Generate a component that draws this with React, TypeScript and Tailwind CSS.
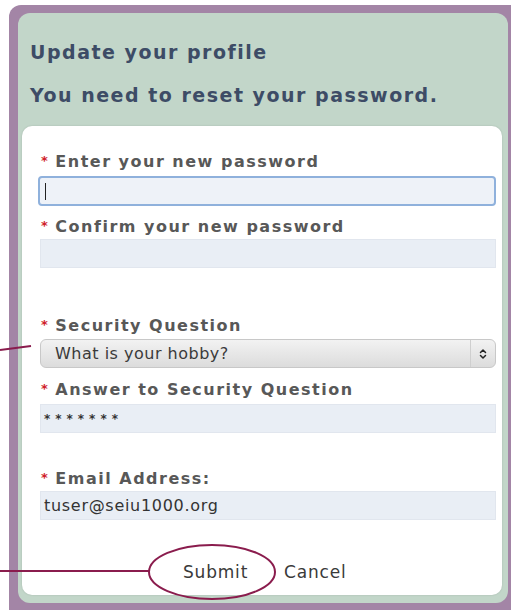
import { ChevronsUpDown } from 'lucide-react';

const font = { fontFamily: '"DejaVu Sans", Verdana, sans-serif' };

const FieldLabel = ({ text, className = '' }: { text: string; className?: string }) => (
  <div className={`flex items-center h-[20px] pl-[3px] text-[16px] tracking-[1.5px] font-bold text-[#585858] ${className}`}>
    <span className="text-[#d0202a] text-[13px] mr-[6px] -mt-[3px]">*</span>
    <span>{text}</span>
  </div>
);

const TextBox = ({ value, className = '' }: { value?: string; className?: string }) => (
  <div className={`h-[29px] bg-[#e9eef5] border border-[#e1e6ee] flex items-center pl-[3px] text-[16px] tracking-[0.7px] text-[#333] ${className}`}>
    {value}
  </div>
);

export default function App() {
  return (
    <div className="relative w-[511px] h-[610px] bg-white overflow-hidden" style={font}>
      <div className="ml-[9px] mt-[5px] h-[610px] bg-[#a385a6] rounded-tl-[12px] pl-[9px] pt-[8px] pr-[3px]">
        <div className="h-[590px] bg-[#c2d6c9] rounded-[12px] pl-[4px] pr-[6px] flex flex-col">
          <div className="pl-[8px] pt-[26px] text-[19px] tracking-[1.5px] font-bold text-[#3d4c66] leading-[26px]">
            <div>Update your profile</div>
            <div className="mt-[17px]">You need to reset your password.</div>
          </div>
          <div className="mt-[18px] flex-1 mb-[8px] bg-white rounded-[10px] shadow-[0_0_2px_rgba(0,0,0,0.15)] pl-[16px] pr-[6px] pt-[26px]">
            <FieldLabel text="Enter your new password" />
            <div className="mt-[4px] h-[30px] bg-[#eef2f8] border-2 border-[#8fb1dc] rounded-[4px] flex items-center pl-[5px]">
              <div className="w-[1px] h-[17px] bg-[#222]" />
            </div>
            <FieldLabel text="Confirm your new password" className="mt-[11px]" />
            <TextBox className="mt-[2px] ml-[2px]" />
            <FieldLabel text="Security Question" className="mt-[48px]" />
            <div className="mt-[3px] ml-[2px] h-[29px] rounded-[6px] border border-[#c8c8c8] bg-gradient-to-b from-[#f2f2f2] to-[#dcdcdc] flex items-center justify-between pl-[14px] pr-[4px] text-[16px] tracking-[0.5px] text-[#3a3a3a]">
              <span>What is your hobby?</span>
              <span className="h-full flex items-center border-l border-[#cfcfcf] pl-[6px] pr-[2px]">
                <ChevronsUpDown className="w-[12px] h-[14px] text-[#222]" strokeWidth={3} />
              </span>
            </div>
            <FieldLabel text="Answer to Security Question" className="mt-[12px]" />
            <TextBox className="mt-[4px] ml-[2px] !tracking-[5px] !text-[12px] font-bold" value="*******" />
            <FieldLabel text="Email Address:" className="mt-[36px]" />
            <TextBox className="mt-[2px] ml-[2px]" value="tuser@seiu1000.org" />
            <div className="mt-[43px] flex items-center h-[20px] text-[17px] tracking-[0.8px] text-[#3a3a3a]">
              <span className="ml-[145px]">Submit</span>
              <span className="ml-[36px]">Cancel</span>
            </div>
          </div>
        </div>
      </div>
      <svg className="absolute inset-0 pointer-events-none" width="511" height="610">
        <line x1="0" y1="350" x2="31" y2="346" stroke="#8a1c4d" strokeWidth="2" />
        <line x1="0" y1="571" x2="150" y2="571" stroke="#8a1c4d" strokeWidth="2" />
        <ellipse cx="212" cy="572" rx="63" ry="27" fill="none" stroke="#8a1c4d" strokeWidth="2" />
      </svg>
    </div>
  );
}
